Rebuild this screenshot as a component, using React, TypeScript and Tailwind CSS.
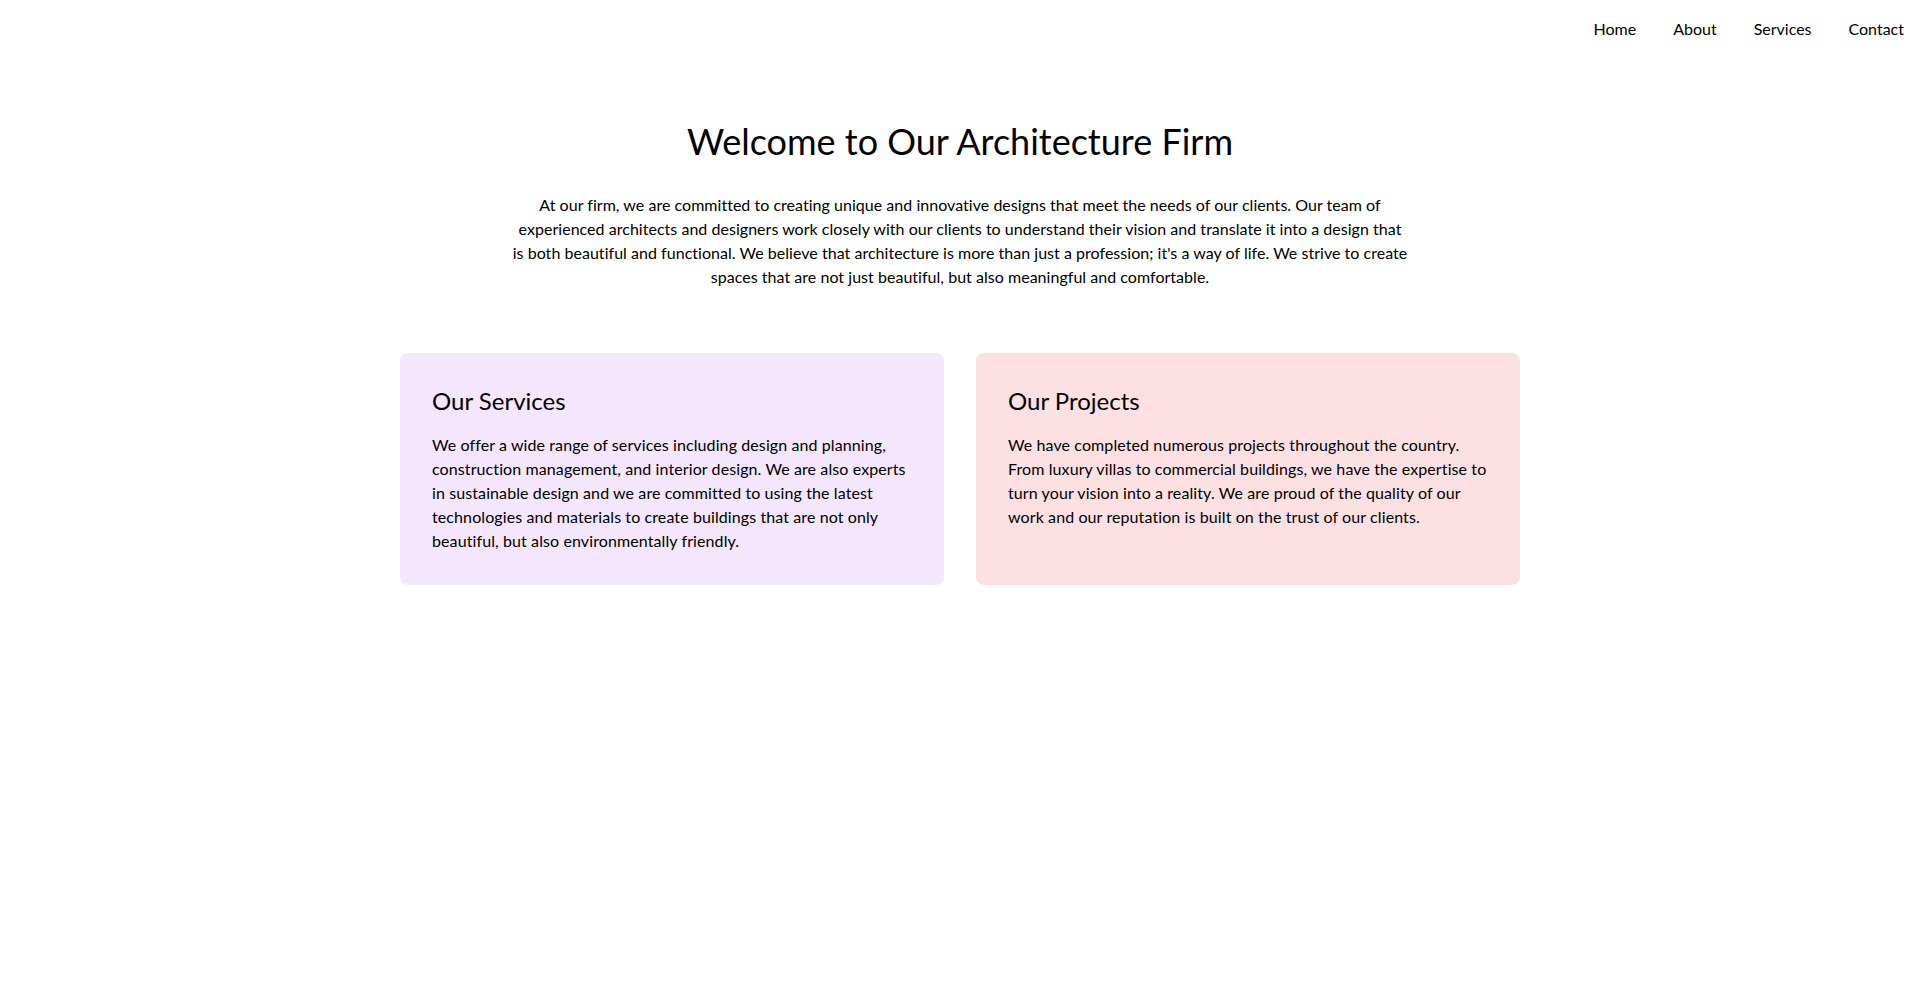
import React from "react";

const links = ["Home", "About", "Services", "Contact"];

const cards = [
  {
    title: "Our Services",
    bg: "bg-[#f3e6fd]",
    text: "We offer a wide range of services including design and planning, construction management, and interior design. We are also experts in sustainable design and we are committed to using the latest technologies and materials to create buildings that are not only beautiful, but also environmentally friendly.",
  },
  {
    title: "Our Projects",
    bg: "bg-[#fde0e1]",
    text: "We have completed numerous projects throughout the country. From luxury villas to commercial buildings, we have the expertise to turn your vision into a reality. We are proud of the quality of our work and our reputation is built on the trust of our clients.",
  },
];

export default function App() {
  return (
    <div className="min-h-screen bg-white text-black font-['Segoe_UI',Lato,sans-serif]">
      {/* Top navigation */}
      <nav className="flex justify-end px-4 pt-[17px] pb-4">
        <ul className="flex gap-[37px]">
          {links.map((l) => (
            <li key={l}>
              <a href="#" className="text-base leading-6">
                {l}
              </a>
            </li>
          ))}
        </ul>
      </nav>

      <main className="py-16">
        <section className="text-center">
          <h1 className="text-4xl leading-10 mb-8">
            Welcome to Our Architecture Firm
          </h1>
          <p className="max-w-4xl mx-auto text-base leading-6 tracking-[0.03px]">
            At our firm, we are committed to creating unique and innovative
            designs that meet the needs of our clients. Our team of experienced
            architects and designers work closely with our clients to
            understand their vision and translate it into a design that is both
            beautiful and functional. We believe that architecture is more than
            just a profession; it's a way of life. We strive to create spaces
            that are not just beautiful, but also meaningful and comfortable.
          </p>
        </section>

        {/* Cards */}
        <section className="max-w-6xl mx-auto px-4 mt-16 grid grid-cols-2 gap-8">
          {cards.map((c) => (
            <div key={c.title} className={`${c.bg} rounded-lg p-8`}>
              <h2 className="text-2xl leading-8 mb-4">{c.title}</h2>
              <p className="text-base leading-6 tracking-[0.1px]">{c.text}</p>
            </div>
          ))}
        </section>
      </main>
    </div>
  );
}
